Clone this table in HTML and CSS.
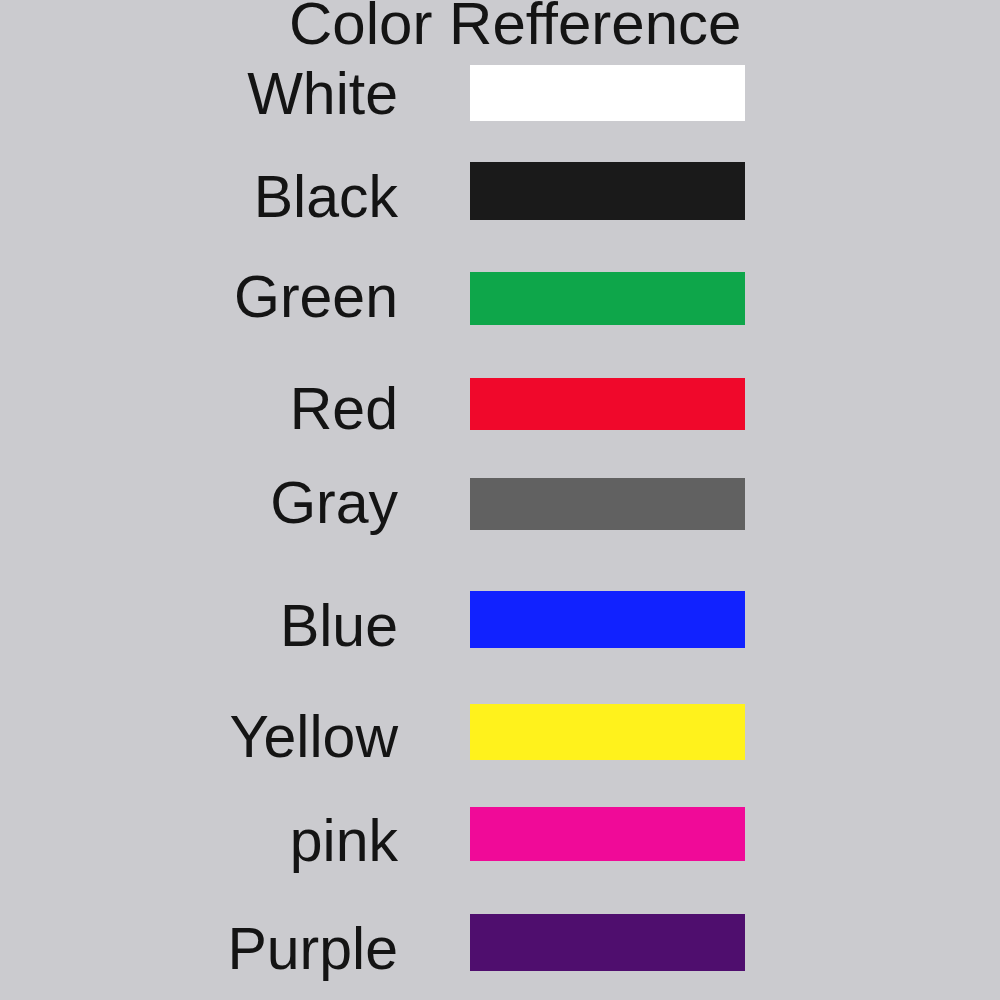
FILE: index.html
```html
<!DOCTYPE html>
<html lang="en">
<head>
<meta charset="utf-8">
<title>Color Refference</title>
<link rel="stylesheet" href="styles.css">
</head>
<body>
<main class="chart">
  <h1 class="title">Color Refference</h1>
  <ul class="list">
    <li class="row r-white"><span class="label">White</span><span class="swatch sw-white"></span></li>
    <li class="row r-black"><span class="label">Black</span><span class="swatch sw-black"></span></li>
    <li class="row r-green"><span class="label">Green</span><span class="swatch sw-green"></span></li>
    <li class="row r-red"><span class="label">Red</span><span class="swatch sw-red"></span></li>
    <li class="row r-gray"><span class="label">Gray</span><span class="swatch sw-gray"></span></li>
    <li class="row r-blue"><span class="label">Blue</span><span class="swatch sw-blue"></span></li>
    <li class="row r-yellow"><span class="label">Yellow</span><span class="swatch sw-yellow"></span></li>
    <li class="row r-pink"><span class="label">pink</span><span class="swatch sw-pink"></span></li>
    <li class="row r-purple"><span class="label">Purple</span><span class="swatch sw-purple"></span></li>
  </ul>
</main>
</body>
</html>
```

FILE: styles.css
```css
html, body {
  margin: 0;
  padding: 0;
  background: #cbcbcf;
}

body {
  width: 1000px;
  height: 1000px;
  overflow: hidden;
  font-family: "Liberation Sans", Arial, sans-serif;
  color: #141414;
}

.chart {
  display: flex;
  flex-direction: column;
}

.title {
  margin: 0 0 0 289px;
  font-size: 60px;
  font-weight: normal;
  line-height: 48px;
  height: 48px;
}

.list {
  list-style: none;
  margin: 0;
  padding: 0;
  display: flex;
  flex-direction: column;
}

.row {
  display: grid;
  grid-template-columns: 398px 275px;
  column-gap: 72px;
  align-items: start;
  margin-top: var(--gap);
}

.label {
  text-align: right;
  font-size: 59px;
  line-height: 60px;
  height: 60px;
  margin-top: var(--lab);
}

.swatch {
  display: block;
  height: var(--h);
  margin-top: var(--sw);
}

.r-white  { --gap: 16px; --lab: 0px; --sw: 1px; --h: 56px; }
.r-black  { --gap: 38px; --lab: 5px; --sw: 0px; --h: 58px; }
.r-green  { --gap: 40px; --lab: 0px; --sw: 5px; --h: 53px; }
.r-red    { --gap: 51px; --lab: 1px; --sw: 0px; --h: 52px; }
.r-gray   { --gap: 34px; --lab: 0px; --sw: 5px; --h: 52px; }
.r-blue   { --gap: 58px; --lab: 5px; --sw: 0px; --h: 57px; }
.r-yellow { --gap: 48px; --lab: 3px; --sw: 0px; --h: 56px; }
.r-pink   { --gap: 40px; --lab: 4px; --sw: 0px; --h: 54px; }
.r-purple { --gap: 43px; --lab: 5px; --sw: 0px; --h: 57px; }

.sw-white  { background: #ffffff; }
.sw-black  { background: #1a1a1a; }
.sw-green  { background: #0ea64a; }
.sw-red    { background: #f0082b; }
.sw-gray   { background: #616161; }
.sw-blue   { background: #1122ff; }
.sw-yellow { background: #fff21c; }
.sw-pink   { background: #f00a98; }
.sw-purple { background: #4f0e6e; }
```
